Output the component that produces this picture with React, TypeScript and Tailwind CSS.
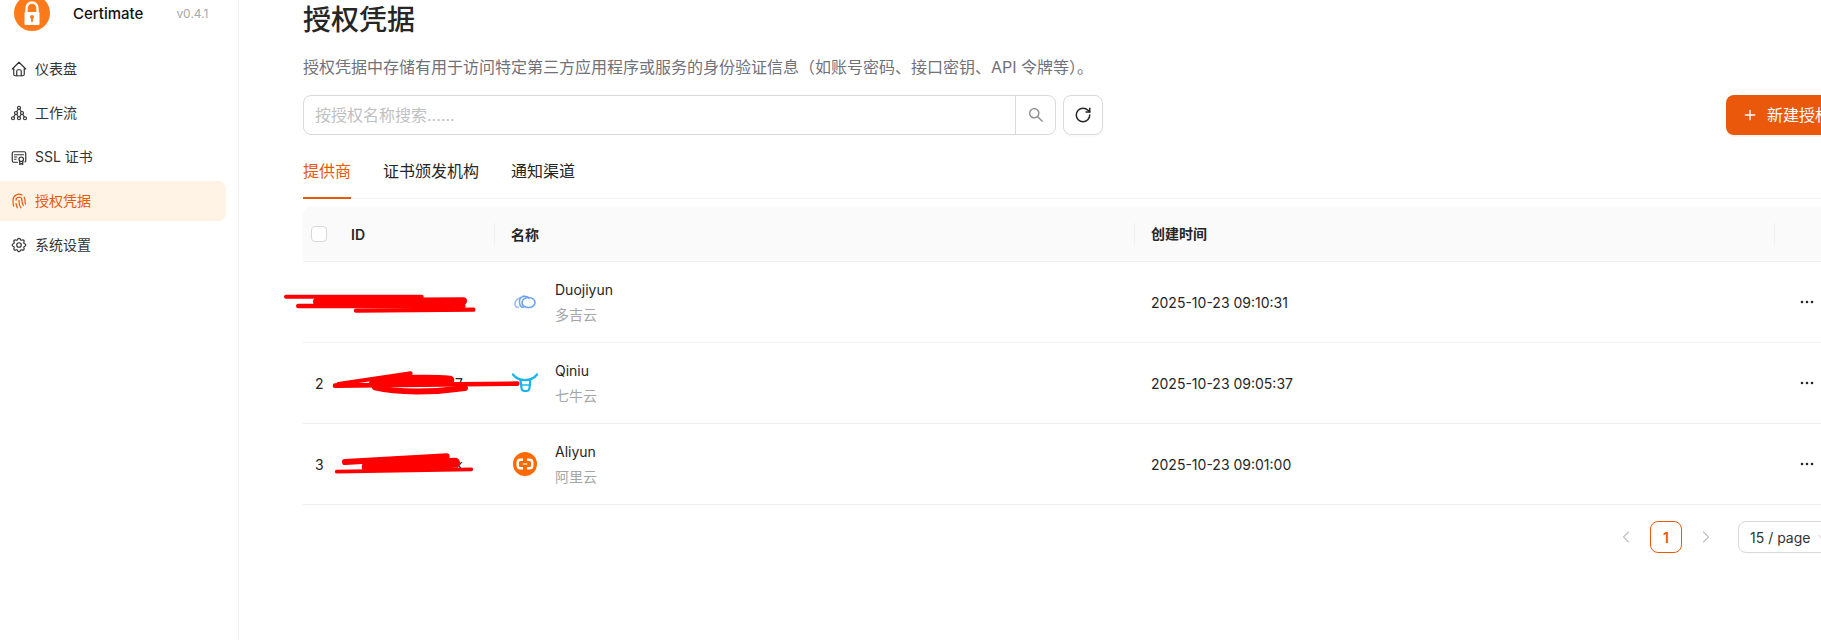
import { TbHome, TbHierarchy3, TbCertificate, TbFingerprint, TbSettings, TbChevronLeft, TbChevronRight, TbChevronDown, TbPlus } from "react-icons/tb";
import { AiOutlineSearch } from "react-icons/ai";
import { RotateCw } from "lucide-react";
import type { ReactNode } from "react";

const font = "font-['Inter','Noto_Sans_CJK_SC',sans-serif]";

const nav = [
  { label: "仪表盘", icon: <TbHome size={18} strokeWidth={1.6} /> },
  { label: "工作流", icon: <TbHierarchy3 size={18} strokeWidth={1.6} /> },
  { label: "SSL 证书", icon: <TbCertificate size={18} strokeWidth={1.6} /> },
  { label: "授权凭据", icon: <TbFingerprint size={18} strokeWidth={1.6} />, active: true },
  { label: "系统设置", icon: <TbSettings size={18} strokeWidth={1.6} /> },
];

function Logo() {
  return (
    <svg width="36" height="36" viewBox="0 0 36 36" className="shrink-0">
      <circle cx="18" cy="18" r="18" fill="#fd7a1b" />
      <path d="M12.5 18v-5a5.5 5.5 0 0 1 11 0v5" fill="none" stroke="#fff" strokeWidth="2.4" />
      <rect x="10.500" y="17" width="15" height="13" rx="1" fill="#fff" />
      <circle cx="18" cy="22" r="2" fill="#fd7a1b" />
      <rect x="17.100" y="22" width="1.800" height="5" fill="#fd7a1b" />
    </svg>
  );
}

function Duojiyun() {
  return (
    <svg width="24" height="24" viewBox="0 0 24 24">
      <g fill="none" strokeWidth="1.600">
        <path d="M8 7.500C4.500 8.500 2 11 2 14c0 2 1.500 3.500 4 3.500" stroke="#9cc0f5" />
        <path d="M11 6C7.500 7 6 10 6.500 13c.4 2.500 2 4.500 4.500 4.500" stroke="#7aa9ee" />
        <ellipse cx="15.500" cy="12.500" rx="6.500" ry="5" stroke="#6aa2f0" />
        <path d="M10 6.500c2.500-.5 5 .5 6.500 2" stroke="#6aa2f0" />
      </g>
    </svg>
  );
}

function Qiniu() {
  return (
    <svg width="26" height="24" viewBox="0 0 26 24">
      <g fill="none" stroke="#1ab5ec" strokeWidth="2.200" strokeLinecap="round">
        <path d="M1 3.500c3 4 6.500 5.600 12 5.600s9-1.600 12-5.600" />
        <path d="M8.500 9.500 9.500 17c.2 2 1 3 3 3h2c2 0 2.800-1 3-3l.8-7.500" />
        <path d="M9.500 14h8" strokeWidth="1.600" />
      </g>
    </svg>
  );
}

function Aliyun() {
  return (
    <svg width="24" height="24" viewBox="0 0 24 24">
      <circle cx="12" cy="12" r="12" fill="#ff6a00" />
      <path d="M10 7.800H7.500a2.800 2.800 0 0 0-2.800 2.800v2.800a2.800 2.800 0 0 0 2.800 2.800H10M14 7.800h2.500a2.800 2.800 0 0 1 2.800 2.800v2.800a2.800 2.800 0 0 1-2.800 2.800H14" fill="none" stroke="#fff" strokeWidth="2.400" />
      <rect x="9.800" y="11.400" width="4.400" height="1.200" fill="#fff" />
    </svg>
  );
}

function Dots() {
  return (
    <svg width="16" height="16" viewBox="0 0 16 16" className="text-[#262626]">
      <g fill="currentColor">
        <circle cx="3" cy="8" r="1.300" />
        <circle cx="8" cy="8" r="1.300" />
        <circle cx="13" cy="8" r="1.300" />
      </g>
    </svg>
  );
}

const rows: { id: string; icon: ReactNode; en: string; zh: string; time: string }[] = [
  { id: "1", icon: <Duojiyun />, en: "Duojiyun", zh: "多吉云", time: "2025-10-23 09:10:31" },
  { id: "2", icon: <Qiniu />, en: "Qiniu", zh: "七牛云", time: "2025-10-23 09:05:37" },
  { id: "3", icon: <Aliyun />, en: "Aliyun", zh: "阿里云", time: "2025-10-23 09:01:00" },
];

const tail: Record<string, string> = { "1": "", "2": "7", "3": "k" };

export default function App() {
  return (
    <div className={`${font} relative flex h-[640px] w-full overflow-hidden bg-white text-[14px] text-[#262626]`}>
      <aside className="w-[239px] shrink-0 border-r border-[#f0f0f0]">
        <div className="mb-[23px] flex h-[26px] items-center pl-[14px]">
          <Logo />
          <span className="ml-[23px] pt-[2px] text-[15px] font-medium text-[#111]">Certimate</span>
          <span className="ml-[33px] pt-[2px] text-[12px] text-[#a8a8a8]">v0.4.1</span>
        </div>
        <nav className="flex flex-col gap-1">
          {nav.map((n) => (
            <div
              key={n.label}
              className={`-ml-2 flex h-10 w-[234px] items-center gap-[7px] rounded-lg pl-[18px] ${
                n.active ? "bg-[#fff3e6] text-[#ea580c]" : "text-[#333]"
              }`}
            >
              {n.icon}
              <span className="pb-[2px]">{n.label}</span>
            </div>
          ))}
        </nav>
      </aside>

      <main className="min-w-0 flex-1 overflow-hidden pl-[64px]">
        <div className="w-[1544px]">
          <h1 className="h-10 text-[28px] font-medium leading-10 text-[#262626]">授权凭据</h1>
          <p className="mt-[15px] h-6 text-[16px] leading-6 text-[#71717a]">
            授权凭据中存储有用于访问特定第三方应用程序或服务的身份验证信息（如账号密码、接口密钥、API 令牌等）。
          </p>
          <div className="mt-4 flex h-10 items-center justify-between">
            <div className="flex items-center gap-[7px]">
              <div className="flex h-10 w-[753px] items-center rounded-lg border border-[#d9d9d9]">
                <span className="flex-1 pl-[11px] text-[16px] text-[#bfbfbf]">按授权名称搜索......</span>
                <span className="flex h-full w-[40px] items-center justify-center border-l border-[#d9d9d9] text-[#8c8c8c]">
                  <AiOutlineSearch size={18} />
                </span>
              </div>
              <button className="flex h-10 w-10 items-center justify-center rounded-lg border border-[#d9d9d9] bg-white text-[#262626] shadow-[0_2px_0_rgba(0,0,0,0.02)]">
                <RotateCw size={18} strokeWidth={2} />
              </button>
            </div>
            <button className="flex h-10 items-center gap-[9px] rounded-lg bg-[#ea580c] px-4 text-[16px] text-white shadow-[0_2px_0_rgba(234,88,12,0.08)]">
              <TbPlus size={16} />
              新建授权
            </button>
          </div>

          <div className="mt-[11px] flex h-[53px] gap-8 border-b border-[#f0f0f0] text-[16px]">
            <div className="-mb-px flex items-center border-b-2 border-[#ea580c] pb-[1px] text-[#ea580c]">提供商</div>
            <div className="flex items-center pb-[2px]">证书颁发机构</div>
            <div className="flex items-center pb-[2px]">通知渠道</div>
          </div>

          <div className="mt-2">
            <div className="grid h-[55px] grid-cols-[192px_640px_640px_1fr] items-center rounded-t-lg border-b border-[#f0f0f0] bg-[#fafafa] font-semibold">
              <div className="flex items-center justify-between">
                <div className="flex items-center">
                  <span className="ml-2 h-4 w-4 rounded border border-[#d9d9d9] bg-white" />
                  <span className="ml-6">ID</span>
                </div>
                <span className="h-[22px] w-px bg-[#f0f0f0]" />
              </div>
              <div className="flex items-center justify-between pl-[16px]">
                <span>名称</span>
                <span className="h-[22px] w-px bg-[#f0f0f0]" />
              </div>
              <div className="flex items-center justify-between pl-[16px]">
                <span className="pb-[1px]">创建时间</span>
                <span className="h-[22px] w-px bg-[#f0f0f0]" />
              </div>
              <div />
            </div>
            {rows.map((r) => (
              <div key={r.id} className="grid h-[81px] grid-cols-[192px_640px_640px_1fr] items-center border-b border-[#f0f0f0]">
                <div className="flex w-[170px] justify-between pl-3 pr-[10px]">
                  <span>{r.id}</span>
                  <span>{tail[r.id]}</span>
                </div>
                <div className="flex items-center pl-[16px]">
                  <span className="flex w-[28px] items-center justify-center">{r.icon}</span>
                  <div className="mb-[1px] ml-4 flex flex-col gap-1 leading-[21px]">
                    <span>{r.en}</span>
                    <span className="text-[#a6a6a6]">{r.zh}</span>
                  </div>
                </div>
                <div className="pl-[16px]">{r.time}</div>
                <div className="pl-6">
                  <Dots />
                </div>
              </div>
            ))}
            <div className="mt-4 flex h-8 items-center justify-end gap-2">
              <span className="flex w-8 items-center justify-center text-[#bfbfbf]">
                <TbChevronLeft size={20} strokeWidth={1.3} />
              </span>
              <span className="flex h-8 w-8 items-center justify-center rounded-lg border border-[#ea580c] font-semibold text-[#ea580c]">1</span>
              <span className="flex w-8 items-center justify-center text-[#bfbfbf]">
                <TbChevronRight size={20} strokeWidth={1.3} />
              </span>
              <div className="ml-2 flex h-8 w-[109px] items-center gap-[5px] rounded-lg border border-[#d9d9d9] pl-[11px]">
                <span className="text-[#333]">15 / page</span>
                <TbChevronDown size={14} strokeWidth={1.3} className="text-[#bfbfbf]" />
              </div>
            </div>
          </div>
        </div>
      </main>

      <svg className="absolute left-[280px] top-[270px] h-[240px] w-[360px]" viewBox="0 0 1080 720">
        <g fill="none" stroke="#ff0000" strokeLinecap="round">
          <path d="M18 80L425 80" strokeWidth="12" />
          <path d="M110 95L550 93" strokeWidth="22" />
          <path d="M55 108L550 108" strokeWidth="14" />
          <path d="M228 122L580 119" strokeWidth="13" />
          <path d="M175 342L392 310" strokeWidth="12" />
          <path d="M165 347L712 341" strokeWidth="14" />
          <path d="M280 340C340 325 460 325 510 330" strokeWidth="26" />
          <path d="M285 352C350 368 460 368 555 354" strokeWidth="18" />
          <path d="M195 576L500 559" strokeWidth="18" />
          <path d="M260 590L525 578" strokeWidth="30" />
          <path d="M170 605L574 598" strokeWidth="11" />
        </g>
      </svg>
    </div>
  );
}
